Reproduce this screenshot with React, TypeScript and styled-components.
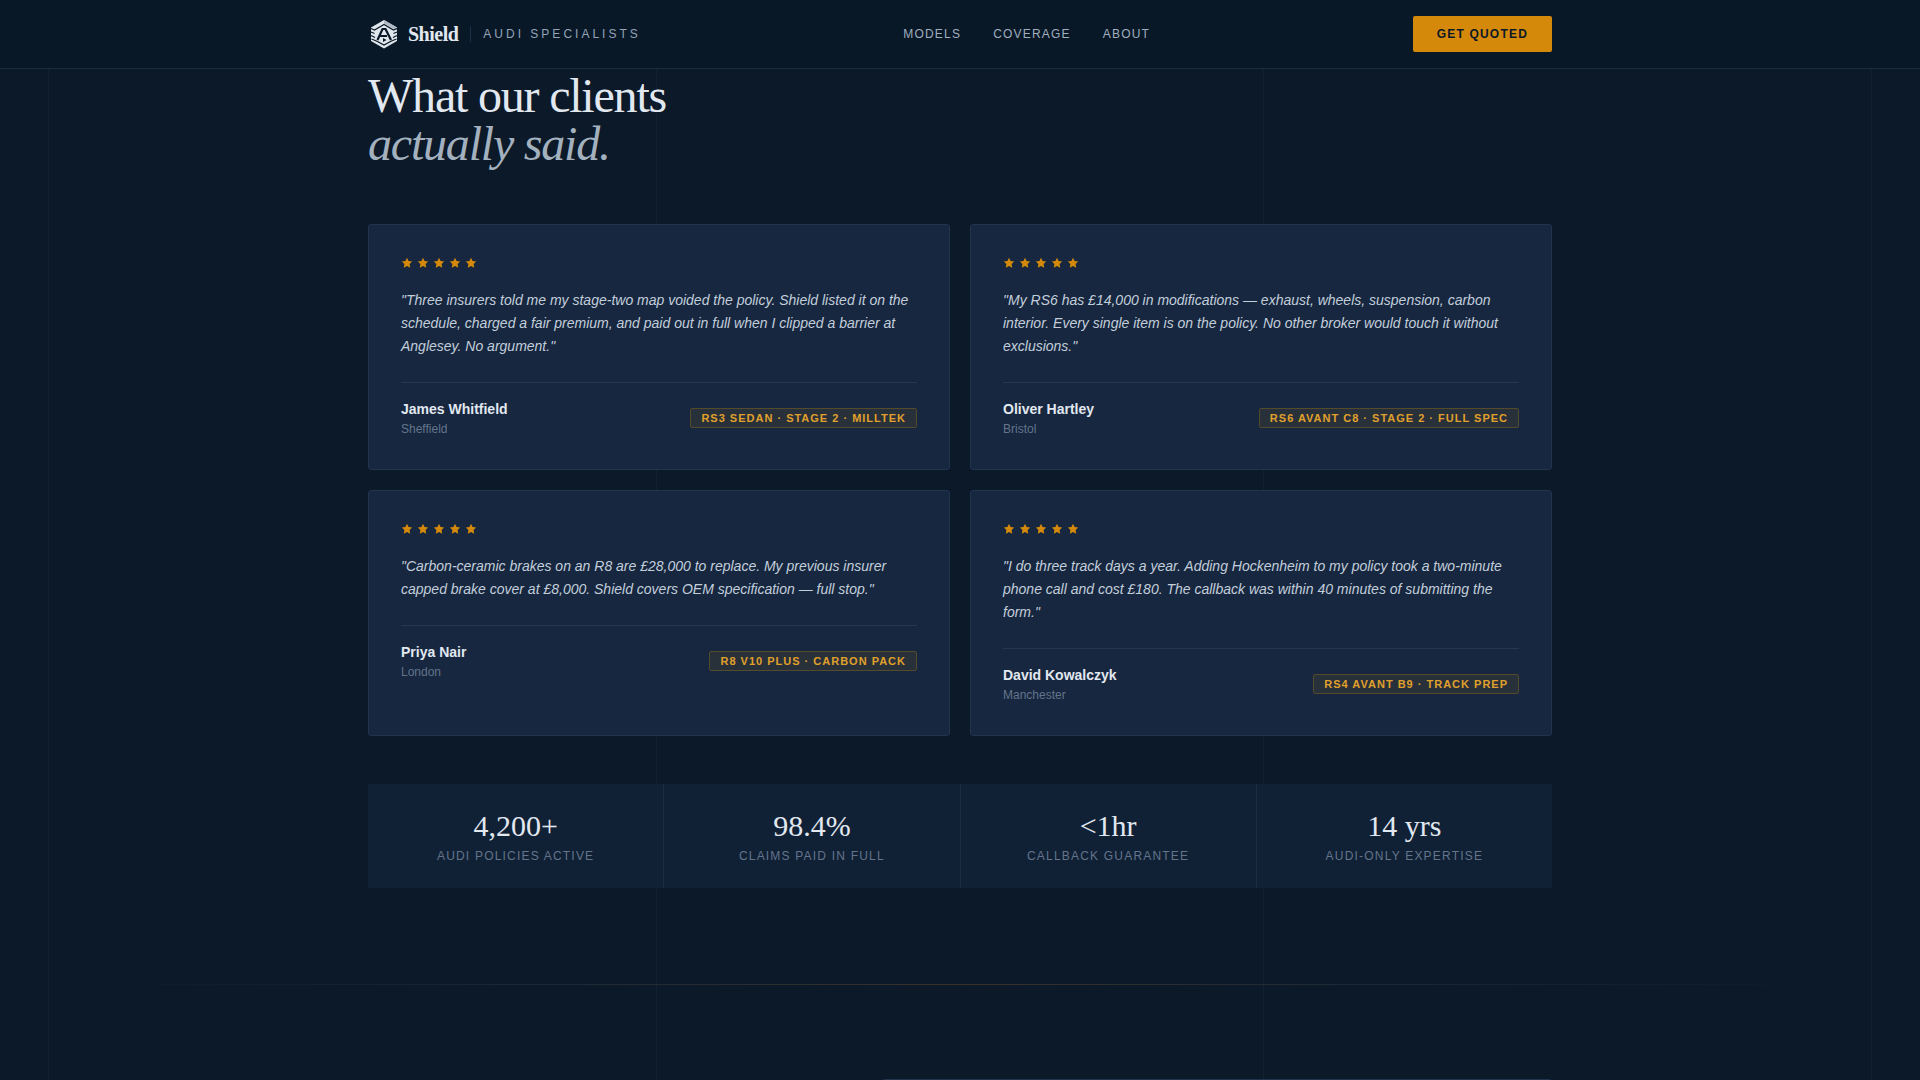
import React from "react";
import styled, { createGlobalStyle } from "styled-components";

const sans = `"Liberation Sans", Arial, sans-serif`;
const serif = `"Liberation Serif", "Times New Roman", serif`;

const GlobalStyle = createGlobalStyle`
  *, *::before, *::after { box-sizing: border-box; }
  html, body { margin: 0; height: 100%; }
  body { background: #0c1928; color: #e2e8f0; font-family: ${sans}; overflow: hidden; }
  #root { height: 100%; }
  p, h2, figure, blockquote, dl, dd { margin: 0; }
`;

const Page = styled.div`
  position: relative;
  height: 100%;
  overflow: hidden;
`;

const GridLines = styled.div`
  position: absolute;
  inset: 0 48px;
  display: flex;
  justify-content: space-between;
  pointer-events: none;
`;

const GridLine = styled.span`
  width: 1px;
  background: rgba(148, 178, 210, 0.05);
`;

const Header = styled.header`
  position: relative;
  z-index: 2;
  background: #091827;
  border-bottom: 1px solid #1c2a3a;
`;

const Container = styled.div`
  position: relative;
  max-width: 1280px;
  margin: 0 auto;
  padding: 0 48px;
`;

const HeaderRow = styled(Container)`
  display: flex;
  align-items: center;
  justify-content: space-between;
  height: 68px;
`;

const Brand = styled.a`
  display: flex;
  align-items: center;
  color: #e2e8f0;
  text-decoration: none;
`;

const BrandName = styled.span`
  margin-left: 8px;
  font: 700 20px/24px ${serif};
  letter-spacing: -0.025em;
`;

const BrandTag = styled.span`
  margin-left: 12px;
  padding-left: 12px;
  border-left: 1px solid #1e3048;
  color: #94a3b8;
  font-size: 12px;
  line-height: 16px;
  letter-spacing: 0.25em;
  text-transform: uppercase;
`;

const Nav = styled.nav`
  display: flex;
  gap: 32px;
`;

const NavLink = styled.a`
  color: #a0aebf;
  font-size: 12px;
  line-height: 16px;
  letter-spacing: 0.1em;
  text-transform: uppercase;
  text-decoration: none;
`;

const QuoteButton = styled.button`
  height: 36px;
  padding: 0 24px;
  border: 0;
  border-radius: 2px;
  background: #d4890a;
  color: #0b1827;
  font: 700 12px/16px ${sans};
  letter-spacing: 0.1em;
  text-transform: uppercase;
`;

const Heading = styled.h2`
  padding-top: 3px;
  margin-bottom: 56px;
  font: 400 48px/48px ${serif};
  letter-spacing: -0.025em;
  color: #e2e8f0;

  em { display: block; color: #a3b1bf; }
`;

const CardGrid = styled.div`
  display: grid;
  grid-template-columns: 1fr 1fr;
  gap: 20px;
`;

const Card = styled.figure`
  padding: 32px;
  border: 1px solid #20344e;
  border-radius: 3px;
  background: #16273f;
`;

const Stars = styled.div`
  display: flex;
  gap: 4px;
  margin-bottom: 20px;
`;

const Quote = styled.blockquote`
  margin-bottom: 24px;
  color: #c3cedb;
  font-size: 14px;
  font-style: italic;
  line-height: 23px;
`;

const CardFooter = styled.figcaption`
  display: flex;
  align-items: center;
  justify-content: space-between;
  padding-top: 16px;
  border-top: 1px solid #263850;
`;

const Name = styled.div`
  color: #e2e8f0;
  font-size: 14px;
  font-weight: 700;
  line-height: 20px;
`;

const Place = styled.div`
  margin-top: 2px;
  color: #64748b;
  font-size: 12px;
  line-height: 16px;
`;

const Badge = styled.span`
  padding: 2px 10px;
  border: 1px solid #544a2c;
  border-radius: 2px;
  background: #28303a;
  color: #e0a02c;
  font-size: 11px;
  font-weight: 700;
  line-height: 14px;
  letter-spacing: 1px;
  text-transform: uppercase;
`;

const Stats = styled.dl`
  display: grid;
  grid-template-columns: repeat(4, 1fr);
  gap: 1px;
  margin-top: 48px;
  border-radius: 3px;
  overflow: hidden;
  background: #1a2d45;
`;

const Stat = styled.div`
  display: flex;
  flex-direction: column-reverse;
  padding: 24px;
  background: #102136;
  text-align: center;
`;

const StatValue = styled.dd`
  font: 400 30px/36px ${serif};
  color: #e2e8f0;
`;

const StatLabel = styled.dt`
  margin-top: 4px;
  color: #64748b;
  font-size: 12px;
  line-height: 16px;
  letter-spacing: 0.1em;
  text-transform: uppercase;
`;

const Divider = styled.hr`
  position: relative;
  width: 90%;
  height: 1px;
  margin: 96px auto 94px;
  border: 0;
  background: linear-gradient(90deg, transparent, #1a2836 25%, #3a3029 50%, #1a2836 75%, transparent);
`;

const NextPanel = styled.div`
  width: 670px;
  height: 80px;
  margin-left: auto;
  border: 1px solid #20344e;
  border-radius: 3px;
  background: #16273f;
`;

const Star = () => (
  <svg width="12" height="12" viewBox="0 0 12 12" fill="#d4890a" aria-hidden="true">
    <path d="M6 .8l1.600 3.300 3.600.5-2.600 2.500.6 3.600L6 9l-3.200 1.700.6-3.600L.8 4.600l3.600-.5z" />
  </svg>
);

const Logo = () => (
  <svg width="32" height="32" viewBox="0 0 32 32" fill="none" aria-hidden="true">
    <path d="M16 2l13 7.500v13.500l-13 7.500L3 23V9.500z" fill="#dfe6ec" />
    <path d="M16 2l13 7.500v3L16 5.500z" fill="#aeb9c4" />
    <path
      d="M3 10.500l3.500 1.500L16 6.500l9.500 5.500 3.500-1.500M3 14l3.500 1.500M29 14l-3.500 1.500M3 17.500l4 2M29 17.500l-4 2M3.500 21l5 2 7.500 4 7.500-4 5-2"
      stroke="#091827"
      strokeWidth="1.200"
    />
    <path d="M9.500 22l5-11h3l5.500 11M12 18h7" stroke="#091827" strokeWidth="2.200" />
    <path d="M15 20l3.500 2-3.500 2z" fill="#091827" />
  </svg>
);

const reviews = [
  { quote: "Three insurers told me my stage-two map voided the policy. Shield listed it on the schedule, charged a fair premium, and paid out in full when I clipped a barrier at Anglesey. No argument.", name: "James Whitfield", place: "Sheffield", car: "RS3 Sedan · Stage 2 · Milltek" },
  { quote: "My RS6 has £14,000 in modifications — exhaust, wheels, suspension, carbon interior. Every single item is on the policy. No other broker would touch it without exclusions.", name: "Oliver Hartley", place: "Bristol", car: "RS6 Avant C8 · Stage 2 · Full spec" },
  { quote: "Carbon-ceramic brakes on an R8 are £28,000 to replace. My previous insurer capped brake cover at £8,000. Shield covers OEM specification — full stop.", name: "Priya Nair", place: "London", car: "R8 V10 Plus · Carbon pack" },
  { quote: "I do three track days a year. Adding Hockenheim to my policy took a two-minute phone call and cost £180. The callback was within 40 minutes of submitting the form.", name: "David Kowalczyk", place: "Manchester", car: "RS4 Avant B9 · Track prep" },
];

const stats = [
  ["4,200+", "Audi policies active"],
  ["98.4%", "Claims paid in full"],
  ["<1hr", "Callback guarantee"],
  ["14 yrs", "Audi-only expertise"],
];

export default function App() {
  return (
    <Page>
      <GlobalStyle />
      <GridLines><GridLine /><GridLine /><GridLine /><GridLine /></GridLines>
      <Header>
        <HeaderRow>
          <Brand href="#">
            <Logo />
            <BrandName>Shield</BrandName>
            <BrandTag>Audi Specialists</BrandTag>
          </Brand>
          <Nav>
            <NavLink href="#models">Models</NavLink>
            <NavLink href="#coverage">Coverage</NavLink>
            <NavLink href="#about">About</NavLink>
          </Nav>
          <QuoteButton type="button">Get quoted</QuoteButton>
        </HeaderRow>
      </Header>
      <main>
        <Container>
          <Heading>What our clients<em>actually said.</em></Heading>
          <CardGrid>
            {reviews.map((r) => (
              <Card key={r.name}>
                <Stars role="img" aria-label="5 out of 5 stars">
                  {[1, 2, 3, 4, 5].map((n) => <Star key={n} />)}
                </Stars>
                <Quote>{`"${r.quote}"`}</Quote>
                <CardFooter>
                  <div>
                    <Name>{r.name}</Name>
                    <Place>{r.place}</Place>
                  </div>
                  <Badge>{r.car}</Badge>
                </CardFooter>
              </Card>
            ))}
          </CardGrid>
          <Stats>
            {stats.map(([value, label]) => (
              <Stat key={label}>
                <StatLabel>{label}</StatLabel>
                <StatValue>{value}</StatValue>
              </Stat>
            ))}
          </Stats>
        </Container>
        <Divider />
        <Container><NextPanel /></Container>
      </main>
    </Page>
  );
}
